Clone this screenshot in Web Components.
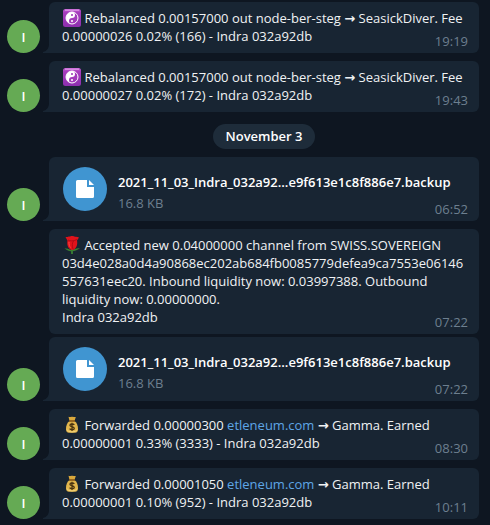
<!DOCTYPE html>
<html lang="en">
<head>
<meta charset="utf-8">
<meta name="viewport" content="width=device-width, initial-scale=1">
<title>Indra notifications</title>
<style>
  body {
    margin: 0;
    min-height: 100vh;
    background: #0e1621;
    color: #f0f2f4;
    font: 13px/18px "Open Sans", "DejaVu Sans", sans-serif;
  }
</style>
</head>
<body>
<chat-history>
  <chat-message time="19:19" avatar="I"><chat-emoji name="yinyang"></chat-emoji> Rebalanced 0.00157000 out node-ber-steg <b>→</b> SeasickDiver. Fee <wbr><span>0.00000026 0.02% (166) - Indra 032a92db</span></chat-message>
  <chat-message time="19:43" avatar="I"><chat-emoji name="yinyang"></chat-emoji> Rebalanced 0.00157000 out node-ber-steg <b>→</b> SeasickDiver. Fee <wbr><span>0.00000027 0.02% (172) - Indra 032a92db</span></chat-message>
  <chat-date>November 3</chat-date>
  <chat-message time="06:52" avatar="I"><chat-file size="16.8 KB">2021_11_03_Indra_032a92...e9f613e1c8f886e7.backup</chat-file></chat-message>
  <chat-message time="07:22" grouped><chat-emoji name="rose"></chat-emoji> Accepted new 0.04000000 channel from SWISS.SOVEREIGN 03d4e028a0d4a90868ec202ab684fb0085779defea9ca7553e06146557631eec20. Inbound liquidity now: 0.03997388. Outbound liquidity now: 0.00000000.<br>Indra 032a92db</chat-message>
  <chat-message time="07:22" avatar="I"><chat-file size="16.8 KB">2021_11_03_Indra_032a92...e9f613e1c8f886e7.backup</chat-file></chat-message>
  <chat-message time="08:30" avatar="I"><chat-emoji name="money"></chat-emoji> Forwarded 0.00000300 <chat-link href="https://etleneum.com">etleneum.com</chat-link> <b>→</b> Gamma. Earned <wbr><span>0.00000001 0.33% (3333) - Indra 032a92db</span></chat-message>
  <chat-message time="10:11" avatar="I"><chat-emoji name="money"></chat-emoji> Forwarded 0.00001050 <chat-link href="https://etleneum.com">etleneum.com</chat-link> <b>→</b> Gamma. Earned <wbr><span>0.00000001 0.10% (952) - Indra 032a92db</span></chat-message>
</chat-history>

<script>
  class BaseElement extends HTMLElement {
    constructor() {
      super();
      this.attachShadow({ mode: 'open' });
    }
    connectedCallback() {
      this.shadowRoot.innerHTML = this.render();
    }
  }

  class ChatHistory extends BaseElement {
    render() {
      return `<style>
        :host { display: flex; flex-direction: column; padding: 2px 11px 6px 7px; }
      </style><slot></slot>`;
    }
  }

  class ChatDate extends BaseElement {
    render() {
      return `<style>
        :host { display: flex; justify-content: center; margin: 4px 0 8px 42px; }
        span { padding: 3px 13px 4px; border-radius: 13px; background: #1e2c3a; color: #fff; font-weight: 600; }
      </style><span><slot></slot></span>`;
    }
  }

  class ChatMessage extends BaseElement {
    render() {
      const avatar = this.getAttribute('avatar');
      return `<style>
        :host { display: flex; align-items: flex-end; margin-bottom: 8px; }
        :host([grouped]) { margin-bottom: 3px; }
        .avatar { flex: none; width: 33px; height: 33px; margin-right: 3px; border-radius: 50%;
          background: #65aa54; color: #fff; display: grid; place-items: center; font-weight: 600; }
        .tail { flex: none; width: 6px; height: 9px; display: block; fill: #182533; }
        .bubble { flex: 1; min-width: 0; display: grid; border-radius: 6px; background: #182533; }
        .tailed { border-bottom-left-radius: 0; }
        :host([grouped]) .bubble { margin-left: 42px; }
        .body, time { grid-area: 1 / 1; }
        .body { padding: 7px 13px 8px; overflow-wrap: anywhere; }
        time { place-self: end; padding: 0 11px 3px; color: #6d7f8f; }
      </style>
      ${avatar ? `<div class="avatar">${avatar}</div>
      <svg class="tail" viewBox="0 0 6 9" aria-hidden="true"><path d="M6 0C6 4 4 7 0 8V9H6Z"/></svg>` : ''}
      <div class="bubble${avatar ? ' tailed' : ''}">
        <div class="body"><slot></slot></div>
        <time>${this.getAttribute('time')}</time>
      </div>`;
    }
  }

  class ChatFile extends BaseElement {
    render() {
      return `<style>
        :host { display: flex; align-items: flex-start; gap: 11px; padding: 3px 1px 1px; }
        button { flex: none; width: 44px; height: 44px; padding: 0; border: 0; border-radius: 50%; background: #4095d1; }
        svg { display: block; width: 44px; height: 44px; }
        .info { min-width: 0; padding-top: 6px; }
        .name { font-weight: 600; color: #fff; }
        .size { margin-top: 3px; color: #6d7f8f; }
      </style>
      <button type="button" aria-label="Download file">
        <svg viewBox="0 0 44 44" fill="#fff" aria-hidden="true">
          <path d="M14.5 13H24V20H31V29.500Q31 31 29.500 31H14.500Q13 31 13 29.500V14.500Q13 13 14.500 13Z"/>
          <path d="M26 13L31 18H26Z"/>
        </svg>
      </button>
      <div class="info"><div class="name"><slot></slot></div><div class="size">${this.getAttribute('size')}</div></div>`;
    }
  }

  class ChatLink extends BaseElement {
    render() {
      return `<style>
        :host { display: inline; }
        a { color: #5ea6e6; text-decoration: none; }
        a:hover { text-decoration: underline; }
      </style><a href="${this.getAttribute('href')}"><slot></slot></a>`;
    }
  }

  const EMOJI = {
    yinyang: `<defs><linearGradient id="g" x2="0" y2="1"><stop stop-color="#c65fd6"/><stop offset=".2" stop-color="#a63cbc"/><stop offset="1" stop-color="#8d2fae"/></linearGradient></defs>
      <rect width="18" height="18" rx="2.500" fill="url(#g)"/>
      <path d="M2 1.200H16" stroke="#e3a2ea" stroke-width="1"/>
      <circle cx="9" cy="9" r="6" fill="#a33bbb" stroke="#fff" stroke-width="1"/>
      <path d="M9 3A6 6 0 0 0 9 15A3 3 0 0 1 9 9A3 3 0 0 0 9 3Z" fill="#fff"/>
      <circle cx="9" cy="6" r="1" fill="#9a35b5"/><circle cx="9" cy="12" r="1" fill="#fff"/>`,
    rose: `<path d="M9 12V18" stroke="#3f8b35" stroke-width="1.600"/>
      <path d="M9 14.500C6 12.500 3.500 12.500 1.500 12.200C4 14.500 7 15.300 9 15.300C12 15.300 15 13.500 17 12.200C14 12.200 11 12.500 9 14.500Z" fill="#3b7d31"/>
      <path d="M2.500 1C5 1.500 5 .3 7 .5C9 -.2 11 0 12 .8C13.500 .5 15 1 16 1.500L14 4.500C15 9 13 13.500 9.300 14C5.500 13.500 3.500 9 4.500 4.800Z" fill="#e0131b"/>
      <path d="M5 4C7 5 10 5.500 14 3.500M10.500 5C9 7 9 10 10 13" fill="none" stroke="#b30a14" stroke-width="1"/>
      <path d="M6 6C5.800 8.500 6.500 10.500 7.500 11.500" fill="none" stroke="#ff4a45" stroke-width="1"/>`,
    money: `<path d="M5.500 .8C7 1.500 8 .3 9 1C10.200 .2 11 1.500 12.800 .9L11.500 5H6.500Z" fill="#d9a83c"/>
      <path d="M6.500 5C4 7 3 9.500 3 13Q3 16.800 6 16.800H12Q15 16.800 15 13C15 9.500 14 7 11.500 5Z" fill="#e2b64c"/>
      <path d="M4 13.500Q4.500 16 9 16T14 13.500" fill="none" stroke="#f2d47c" stroke-width="1"/>
      <path d="M6 5H12" stroke="#805014" stroke-width="1.500"/>
      <path d="M11.300 8.800C10.500 7.700 7 7.600 6.900 9.300C6.900 11.300 11.400 10.200 11.300 12.400C11.100 14.200 7.400 14 6.600 12.700M9 6.800V15" fill="none" stroke="#4b3511" stroke-width="1.300"/>`
  };

  class ChatEmoji extends BaseElement {
    render() {
      return `<style>
        :host { display: inline-block; width: 18px; height: 18px; margin-left: 1px; vertical-align: bottom; }
        svg { display: block; width: 18px; height: 18px; }
      </style><svg viewBox="0 0 18 18" aria-hidden="true">${EMOJI[this.getAttribute('name')]}</svg>`;
    }
  }

  customElements.define('chat-history', ChatHistory);
  customElements.define('chat-date', ChatDate);
  customElements.define('chat-message', ChatMessage);
  customElements.define('chat-file', ChatFile);
  customElements.define('chat-link', ChatLink);
  customElements.define('chat-emoji', ChatEmoji);
</script>
</body>
</html>
